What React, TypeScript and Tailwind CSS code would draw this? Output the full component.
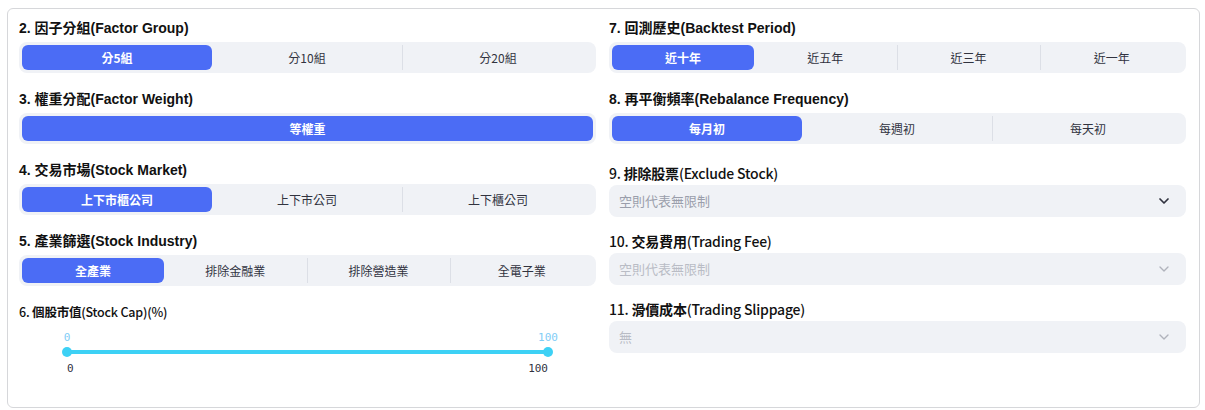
import { ChevronDown } from 'lucide-react';

const boldFont = "font-['Liberation_Sans','Noto_Sans_CJK_TC',sans-serif]";
const cjkFont = "font-['Noto_Sans_CJK_TC',sans-serif]";

function Segmented({ options, active = 0 }: { options: string[]; active?: number }) {
  return (
    <div className="flex h-[31px] rounded-lg bg-[#f0f2f6] p-[3px]">
      {options.map((opt, i) => {
        const isActive = i === active;
        const sep = i > 0 && i !== active && i - 1 !== active;
        return (
          <div
            key={opt}
            className={
              'flex flex-1 items-center justify-center text-[12px] ' +
              cjkFont +
              (isActive
                ? ' rounded-md bg-[#4b6cf5] font-semibold text-white'
                : ' text-[#31333f]') +
              (sep ? ' border-l border-[#dcdfe6]' : '')
            }
          >
            {opt}
          </div>
        );
      })}
    </div>
  );
}

function BoldLabel({ children }: { children: React.ReactNode }) {
  return (
    <div className={`mb-1 h-5 text-[14px] font-bold leading-5 text-[#111] ${boldFont}`}>
      {children}
    </div>
  );
}

function SansLabel({ children }: { children: React.ReactNode }) {
  return (
    <div className={`h-6 text-[14px] font-medium leading-6 tracking-[-0.2px] text-[#111] ${cjkFont}`}>
      {children}
    </div>
  );
}

function Select({ placeholder, disabled }: { placeholder: string; disabled?: boolean }) {
  return (
    <div className="flex h-8 items-center justify-between rounded-lg bg-[#f0f2f6] pl-[10px] pr-[14px]">
      <span className={`text-[13px] ${cjkFont} ${disabled ? 'text-[#b9bcc5]' : 'text-[#9a9eab]'}`}>
        {placeholder}
      </span>
      <ChevronDown
        className={`h-4 w-4 ${disabled ? 'text-[#b0b3bc]' : 'text-[#31333f]'}`}
        strokeWidth={disabled ? 2 : 2.6}
      />
    </div>
  );
}

export default function App() {
  return (
    <div className="min-h-screen bg-white pl-[7px] pt-[8px]">
      <div className="flex h-[400px] w-[1193px] gap-[13px] rounded-md border border-[#d6d7da] pl-[11px] pr-3 pt-[9px]">
        <div className="flex w-[577px] flex-col">
          <BoldLabel>2. 因子分組(Factor Group)</BoldLabel>
          <Segmented options={['分5組', '分10組', '分20組']} />
          <div className="mt-4">
            <BoldLabel>3. 權重分配(Factor Weight)</BoldLabel>
            <Segmented options={['等權重']} />
          </div>
          <div className="mt-4">
            <BoldLabel>4. 交易市場(Stock Market)</BoldLabel>
            <Segmented options={['上下市櫃公司', '上下市公司', '上下櫃公司']} />
          </div>
          <div className="mt-4">
            <BoldLabel>5. 產業篩選(Stock Industry)</BoldLabel>
            <Segmented options={['全產業', '排除金融業', '排除營造業', '全電子業']} />
          </div>
          <div className="mt-[14px]">
            <div className={`h-6 text-[12.5px] font-medium leading-6 tracking-[-0.2px] text-[#111] ${cjkFont}`}>
              6. <span className="font-bold">個股市值</span>(Stock Cap)(%)
            </div>
            <div className="ml-[48px] w-[481px] font-['DejaVu_Sans_Mono',monospace] text-[11px]">
              <div className="relative mt-[7px] h-[14px]">
                <span className="absolute left-0 top-0 -translate-x-1/2 leading-[14px] text-[#7fcdf6]">0</span>
                <span className="absolute left-full top-0 -translate-x-1/2 leading-[14px] text-[#7fcdf6]">100</span>
              </div>
              <div className="relative mt-[5px] h-1 rounded-full bg-[#3dd1f5]">
                <div className="absolute -left-[5px] -top-[3px] h-[10px] w-[10px] rounded-full bg-[#3dd1f5]" />
                <div className="absolute -right-[5px] -top-[3px] h-[10px] w-[10px] rounded-full bg-[#3dd1f5]" />
              </div>
              <div className="mt-[8px] flex justify-between leading-[14px] text-[#31333f]">
                <span>0</span>
                <span>100</span>
              </div>
            </div>
          </div>
        </div>

        <div className="flex w-[577px] flex-col">
          <BoldLabel>7. 回測歷史(Backtest Period)</BoldLabel>
          <Segmented options={['近十年', '近五年', '近三年', '近一年']} />
          <div className="mt-4">
            <BoldLabel>8. 再平衡頻率(Rebalance Frequency)</BoldLabel>
            <Segmented options={['每月初', '每週初', '每天初']} />
          </div>
          <div className="mt-[17px]">
            <SansLabel>
              9. <span className="font-bold">排除股票</span>(Exclude Stock)
            </SansLabel>
            <Select placeholder="空則代表無限制" />
          </div>
          <div className="mt-3">
            <SansLabel>
              10. <span className="font-bold">交易費用</span>(Trading Fee)
            </SansLabel>
            <Select placeholder="空則代表無限制" disabled />
          </div>
          <div className="mt-3">
            <SansLabel>
              11. <span className="font-bold">滑價成本</span>(Trading Slippage)
            </SansLabel>
            <Select placeholder="無" disabled />
          </div>
        </div>
      </div>
    </div>
  );
}
